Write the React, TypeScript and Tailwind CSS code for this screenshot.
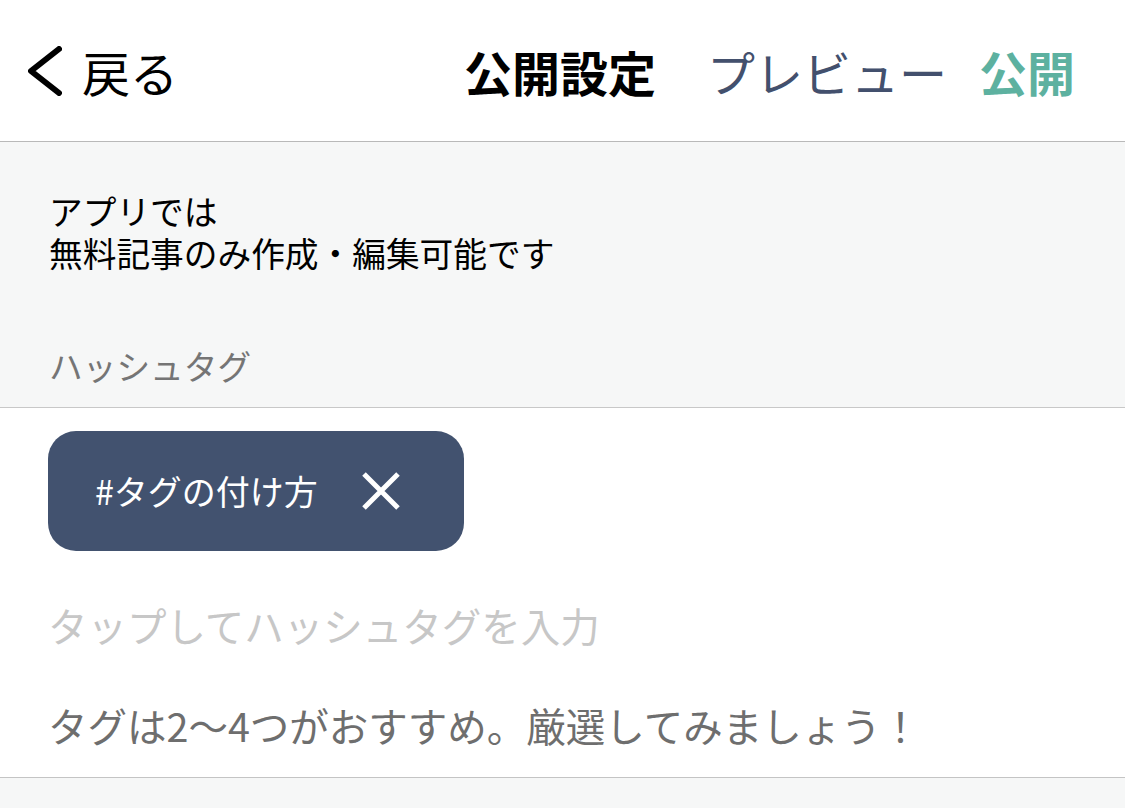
const font = { fontFamily: '"Noto Sans CJK JP", "Noto Sans", sans-serif' };

const App = (): JSX.Element => {
  return (
    <div className="w-[1125px] h-[808px] bg-[#f6f7f7] overflow-hidden" style={font}>
      {/* HEADER */}
      <div className="h-[142px] bg-white border-b border-[#b9b9b9] flex items-center pl-[28px] pr-[50px]">
        <div className="flex items-center gap-[20px]">
          <svg width="34" height="50" viewBox="0 0 34 50" fill="none">
            <path d="M31 3 L3 25 L31 47" stroke="#000" strokeWidth="6" strokeLinecap="round" strokeLinejoin="round" />
          </svg>
          <span className="text-[48px] leading-none text-black">戻る</span>
        </div>
        <div className="ml-auto flex items-center">
          <span className="text-[48px] leading-none font-bold text-black">公開設定</span>
          <span className="ml-[51px] text-[48px] leading-none text-[#43506d]">プレビュー</span>
          <span className="ml-[32px] text-[48px] leading-none font-bold text-[#5db1a0]">公開</span>
        </div>
      </div>

      {/* NOTICE */}
      <div className="h-[266px] pl-[49px] pt-[47px] border-b border-[#c8c8c8]">
        <p className="text-[33.7px] leading-[43px] text-black">アプリでは</p>
        <p className="text-[33.7px] leading-[42px] text-black">無料記事のみ作成・編集可能です</p>
        <p className="mt-[71px] text-[33.7px] leading-[42px] text-[#757575]">ハッシュタグ</p>
      </div>

      {/* TAGS */}
      <div className="bg-white pl-[48px] pt-[23px] pb-[28px] border-b border-[#c4c4c4]">
        <div className="inline-flex items-center h-[120px] rounded-[28px] bg-[#42526f] pl-[47px] pr-[64px]">
          <span className="text-[34px] leading-none text-white">#タグの付け方</span>
          <svg className="ml-[44px]" width="38" height="38" viewBox="0 0 38 38" fill="none">
            <path d="M2 2 L36 36 M36 2 L2 36" stroke="#fff" strokeWidth="5" />
          </svg>
        </div>
        <p className="mt-[50px] text-[39.5px] leading-[48px] text-[#c7c7c7]">タップしてハッシュタグを入力</p>
        <p className="mt-[52px] text-[39.5px] leading-[48px] text-[#6e6e6e]">タグは2〜4つがおすすめ。厳選してみましょう！</p>
      </div>
    </div>
  );
};

export default App;
